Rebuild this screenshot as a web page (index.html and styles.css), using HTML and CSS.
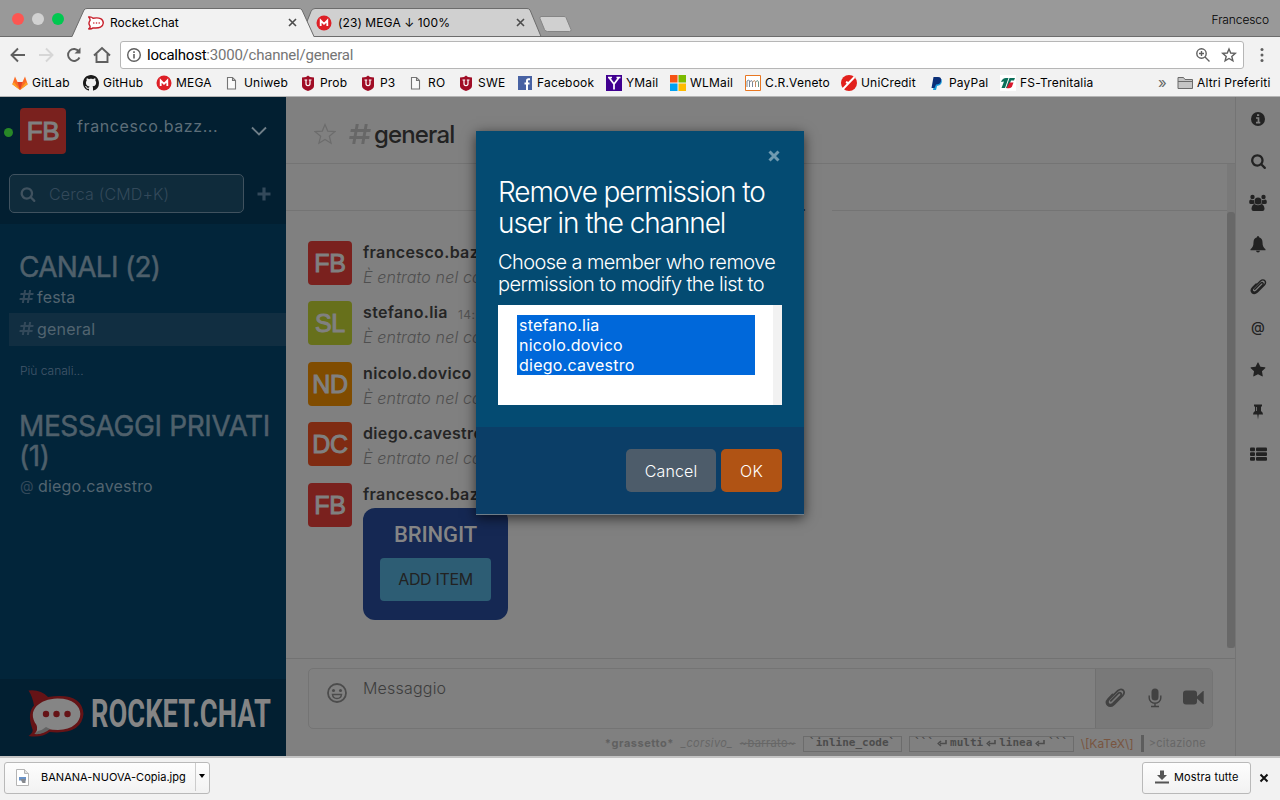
FILE: index.html
```html
<!DOCTYPE html>
<html lang="it">
<head>
<meta charset="utf-8">
<title>Rocket.Chat</title>
<link rel="stylesheet" href="styles.css">
</head>
<body>
<svg class="defs" width="0" height="0">
  <symbol id="search" viewBox="0 0 1792 1792"><path d="M1216 832q0-185-131.5-316.5t-316.5-131.5-316.5 131.5-131.5 316.5 131.5 316.5 316.5 131.5 316.5-131.5 131.5-316.5zm512 832q0 52-38 90t-90 38q-54 0-90-38l-343-342q-179 124-399 124-143 0-273.5-55.5t-225-150-150-225-55.5-273.5 55.5-273.5 150-225 225-150 273.5-55.5 273.5 55.5 225 150 150 225 55.5 273.5q0 220-124 399l343 343q37 37 37 90z"/></symbol>
  <symbol id="star" viewBox="0 0 1792 1792"><path d="M1728 647q0 22-26 48l-363 354 86 500q1 7 1 20 0 21-10.5 35.5t-30.5 14.5q-19 0-40-12l-449-236-449 236q-22 12-40 12-21 0-31.5-14.5t-10.5-35.5q0-6 2-20l86-500-364-354q-25-27-25-48 0-37 56-46l502-73 225-455q19-41 49-41t49 41l225 455 502 73q56 9 56 46z"/></symbol>
  <symbol id="clip" viewBox="0 0 18 18"><path d="M5 11.800L11.300 5.500q1.400-1.200 2.300-.3t-.3 2.300L6.600 14.200q-2 1.700-3.500.2t.2-3.500L11 3.200q2.600-2.200 4.600-.4 1.800 2-.4 4.600l-7.400 7.400q-3.200 2.900-5.500.7t.5-5.400L6.500 6.300" fill="none" stroke-width="1.500" stroke-linecap="round"/></symbol>
  <symbol id="page" viewBox="0 0 16 16"><path d="M3.500 2.500h5l3 3v8.500h-8zM8.500 2.500v3h3" fill="#fafafa" stroke="#757575" stroke-width="1.100"/></symbol>
  <symbol id="shield" viewBox="0 0 16 16"><path d="M8 0.500l2 1.500 4 .5v8.500q0 3-6 5-6-2-6-5v-8.500l4-.5z" fill="#a00d26"/><path d="M4.500 5h2.700M8.800 5h2.700M6 5v3.500q0 2.200 2 2.200t2-2.200v-3.500" fill="none" stroke="#fff" stroke-width="1.200"/></symbol>
  <symbol id="mega" viewBox="0 0 16 16"><circle cx="8" cy="8" r="7.500" fill="#dd1f26"/><path d="M4.700 11v-5.500l3.300 3.300 3.300-3.300v5.500" fill="none" stroke="#fff" stroke-width="1.800"/></symbol>
</svg>

<header class="tabs">
  <svg class="tab-shapes" width="600" height="37">
    <circle cx="18" cy="19" r="6" fill="#fc5652"/><circle cx="38" cy="19" r="6" fill="#d1d1d1"/><circle cx="58" cy="19" r="6" fill="#00c850"/>
    <path d="M306 36.500h235L530 10q-1-1.500-3-1.500H315q-3 0-4 3L306 24z" fill="#d0d0d0" stroke="#6c6c6c"/>
    <path d="M541 16.500h23q1.500 0 2 1l5 12q.5 2-1.500 2h-22q-2 0-3-2l-4.500-11q-.5-2 1-2z" fill="#d0d0d0" stroke="#858585"/>
    <path d="M72 37L84 10q1-1.500 3-1.500H299q2 0 3 1.500L314 37z" fill="#f2f2f2"/>
    <path d="M0 36.500H72L84 10q1-1.500 3-1.500H299q2 0 3 1.500L314 36.500H600" fill="none" stroke="#6c6c6c"/>
  </svg>
  <div class="tab first">
    <svg width="16" height="16" viewBox="0 0 16 16"><path d="M.7 2q2.600-.5 4.300 1.200 10-1.700 10.300 4.800-.5 6-10.300 4.900-1.800 1.400-4.300 1 2-1.300 1.200-3-2-2.700.2-5.600Q2.200 3.600.7 2z" fill="#fff" stroke="#c8202c" stroke-width="1.400"/><circle cx="5.800" cy="8" r=".8" fill="#c8202c"/><circle cx="8.500" cy="8" r=".8" fill="#c8202c"/><circle cx="11.200" cy="8" r=".8" fill="#c8202c"/></svg>
    <span>Rocket.Chat</span><svg class="x" width="9" height="9" viewBox="0 0 9 9"><path d="M1 1l7 7M8 1l-7 7"/></svg>
  </div>
  <div class="tab second">
    <svg width="16" height="16"><use href="#mega"/></svg>
    <span>(23) MEGA ↓ 100%</span><svg class="x" width="9" height="9" viewBox="0 0 9 9"><path d="M1 1l7 7M8 1l-7 7"/></svg>
  </div>
  <span class="profile">Francesco</span>
</header>

<div class="toolbar">
  <svg class="nav" width="110" height="20" viewBox="0 0 110 20" fill="none" stroke="#5f5f5f" stroke-width="1.900">
    <path d="M16 10H3M9 3.500L2.500 10l6.500 6.500"/>
    <path d="M30 10h13M37 3.500L43.500 10l-6.500 6.500" stroke="#d6d6d6"/>
    <path d="M70 6.500a6 6 0 1 0 .5 6"/><path d="M71.500 2.500v6h-6z" fill="#5f5f5f" stroke="none"/>
    <path d="M85 10.500l8-7.500 8 7.500M87.500 9v8h11V9"/>
  </svg>
  <div class="address">
    <svg width="16" height="16" viewBox="0 0 16 16"><circle cx="8" cy="8" r="6.300" fill="none" stroke="#5f5f5f" stroke-width="1.400"/><path d="M8 7v4.500M8 4.300v1.600" stroke="#5f5f5f" stroke-width="1.600"/></svg>
    <span class="url"><b>localhost</b>:3000/channel/general</span>
    <svg width="16" height="16" viewBox="0 0 16 16" fill="none" stroke="#5f5f5f" stroke-width="1.400"><circle cx="6.500" cy="6.500" r="4.700"/><path d="M10 10l4.500 4.500M4 6.500h5M6.500 4v5"/></svg>
    <svg class="fav" width="16" height="16" viewBox="0 0 16 16"><path d="M8 2l1.700 4 4.600.4-3.500 3 1.100 4.400L8 11.500l-3.900 2.300 1.100-4.400-3.500-3L6.300 6z" fill="none" stroke="#5f5f5f" stroke-width="1.400"/></svg>
  </div>
  <svg class="more" width="4" height="16" fill="#5f5f5f"><circle cx="2" cy="2.500" r="1.500"/><circle cx="2" cy="8" r="1.500"/><circle cx="2" cy="13.500" r="1.500"/></svg>
</div>

<nav class="bookmarks">
  <div class="bm"><svg width="16" height="16" viewBox="0 0 16 16"><path d="M8 15L.3 9.300 3 1.500 5.500 7h5L13 1.500l2.700 7.800z" fill="#fc6d26"/><path d="M8 15L5.500 7h5z" fill="#e24329"/><path d="M.3 9.300L8 15 2 7zM15.700 9.300L8 15 14 7z" fill="#fca326"/></svg>GitLab</div>
  <div class="bm"><svg width="16" height="16" viewBox="0 0 16 16"><path d="M8 0C3.580 0 0 3.580 0 8c0 3.540 2.290 6.530 5.470 7.590.4.070.55-.17.55-.38 0-.19-.01-.82-.01-1.490-2.010.37-2.530-.49-2.690-.94-.09-.23-.48-.94-.82-1.130-.28-.15-.68-.52-.01-.53.63-.01 1.080.58 1.230.82.72 1.210 1.870.87 2.330.66.07-.52.28-.87.51-1.070-1.780-.2-3.640-.89-3.640-3.950 0-.87.31-1.590.82-2.150-.08-.2-.36-1.020.08-2.120 0 0 .67-.21 2.200.82.64-.18 1.320-.27 2-.27s1.360.09 2 .27c1.530-1.040 2.200-.82 2.200-.82.44 1.100.16 1.920.08 2.120.51.56.82 1.270.82 2.150 0 3.070-1.870 3.750-3.650 3.950.29.25.54.73.54 1.480 0 1.070-.01 1.930-.01 2.200 0 .21.15.46.55.38A8.010 8.010 0 0 0 16 8c0-4.420-3.580-8-8-8z" fill="#1a1a1a"/></svg>GitHub</div>
  <div class="bm"><svg width="16" height="16"><use href="#mega"/></svg>MEGA</div>
  <div class="bm"><svg width="16" height="16"><use href="#page"/></svg>Uniweb</div>
  <div class="bm"><svg width="16" height="16"><use href="#shield"/></svg>Prob</div>
  <div class="bm"><svg width="16" height="16"><use href="#shield"/></svg>P3</div>
  <div class="bm"><svg width="16" height="16"><use href="#page"/></svg>RO</div>
  <div class="bm"><svg width="16" height="16"><use href="#shield"/></svg>SWE</div>
  <div class="bm"><svg width="16" height="16" viewBox="0 0 16 16"><path d="M1 1h14v14H1z" fill="#4862a3"/><path d="M13 4.300h-1.500q-1.500 0-1.500 1.500V15M7.500 8.500h5" fill="none" stroke="#fff" stroke-width="2"/></svg>Facebook</div>
  <div class="bm"><svg width="16" height="16" viewBox="0 0 16 16"><path d="M0 0h16v16H0z" fill="#400090"/><path d="M3 2.500L8 9l5-6.500M8 9v5.500M2 2.500h4M10.500 2.500h4" fill="none" stroke="#fff" stroke-width="1.700"/></svg>YMail</div>
  <div class="bm"><svg width="16" height="16" viewBox="0 0 16 16"><path d="M0 0h7.500v7.500H0z" fill="#f65314"/><path d="M8.500 0H16v7.500H8.500z" fill="#7cbb00"/><path d="M0 8.500h7.500V16H0z" fill="#00a1f1"/><path d="M8.500 8.500H16V16H8.500z" fill="#ffbb00"/></svg>WLMail</div>
  <div class="bm"><svg width="16" height="16" viewBox="0 0 16 16" fill="none"><path d="M.5.500h15v15H.5z" fill="#fff" stroke="#e87722"/><path d="M2 12V6q2-2 2.500 0v6M4.500 7q2.500-3 3 0v5" stroke="#789"/><path d="M7.500 7q2.500-3 3 0v5" stroke="#c98b60"/><path d="M10.500 7q2.500-3 3 0v5" stroke="#6a9585"/></svg>C.R.Veneto</div>
  <div class="bm"><svg width="16" height="16" viewBox="0 0 16 16"><circle cx="8" cy="8" r="8" fill="#e2201c"/><path d="M1.500 14.500L13.500 2M5 7l3 1.500" fill="none" stroke="#fff" stroke-width="2"/></svg>UniCredit</div>
  <div class="bm"><svg width="16" height="16" viewBox="0 0 16 16"><path d="M6 4h6.500q1.500 6-4.500 7l-1 4H4z" fill="#1a9bdc"/><path d="M4.500 2H9q4 0 3 4.300-1 3.200-5 3.200L5.500 13H2.500z" fill="#0b2f78"/></svg>PayPal</div>
  <div class="bm"><svg width="16" height="16" viewBox="0 0 16 16"><path d="M0 0h16v16H0z" fill="#fff"/><path d="M1 7q1.500-4 5-4h2.500L5 13H1.500L4 6.500z" fill="#0b6f59"/><path d="M9.500 3H15l-1 2.500h-3L8.500 13H6z" fill="#0b6f59"/><path d="M9.500 7.500h4l-1.500 4q-.8 1.800-3 1.800H6.500z" fill="#d9182d"/></svg>FS-Trenitalia</div>
  <span class="overflow">»</span>
  <div class="bm folder"><svg width="17" height="16" viewBox="0 0 17 16"><path d="M1 13.500V2.500h5.500L8 4.500h7.500v9z" fill="#c5c5c5" stroke="#6b6b6b"/><path d="M1 6.500h14.500" stroke="#6b6b6b"/></svg>Altri Preferiti</div>
</nav>

<div class="app">
  <aside class="sidebar">
    <div class="side-head">
      <div class="account">
        <i class="online"></i><div class="avatar big red">FB</div><span class="account-name">francesco.bazz...</span>
        <svg width="18" height="11" viewBox="0 0 18 11"><path d="M2 1.500l7 7 7-7" fill="none" stroke="#6f7e88" stroke-width="1.900"/></svg>
      </div>
      <div class="search-row">
        <div class="search"><svg width="16" height="16"><use href="#search"/></svg><span>Cerca (CMD+K)</span></div>
        <svg width="14" height="14" viewBox="0 0 14 14"><path d="M7 .5v13M.5 7h13" stroke="#33495a" stroke-width="3.200"/></svg>
      </div>
    </div>
    <div class="side-body">
      <h3 class="channels">CANALI (2)</h3>
      <div class="room"><i class="hash"></i><span>festa</span></div>
      <div class="room active"><i class="hash"></i><span>general</span></div>
      <div class="more-channels">Più canali...</div>
      <h3>MESSAGGI PRIVATI (1)</h3>
      <div class="room dm"><i>@</i><span>diego.cavestro</span></div>
    </div>
    <div class="logo">
      <svg width="286" height="77" viewBox="0 679 286 77">
        <path d="M28.500 690.500q12-1.500 19.500 6.500 34-5 35.500 17-2 21-34 18-8 6-21 4 6-4 3.500-8-5-15 2-22.500-1.500-9-5.500-15z" fill="#651316"/>
        <path d="M57 698.500c31-.5 31 31 1 31.500q-6 0-10-1-5 5-13.500 5 4-4 2-9C26 710 40 699 57 698.500z" fill="#858585"/>
        <path d="M38 731q4-.5 8-4l4 2q-7 6-15.500 5z" fill="#636363"/>
        <circle cx="46" cy="714" r="3.200" fill="#651316"/><circle cx="56.500" cy="714" r="3.200" fill="#651316"/><circle cx="67.500" cy="714" r="3.200" fill="#651316"/>
        <text transform="translate(91 727) scale(.7 1)" textLength="257">ROCKET.CHAT</text>
      </svg>
    </div>
  </aside>

  <main class="chat">
    <div class="room-head">
      <svg width="22" height="22" viewBox="0 0 22 22"><path d="M11 1.500l2.700 6.600 7.100.5-5.500 4.600 1.800 7-6.100-3.800-6.100 3.800 1.800-7L1.200 8.600l7.100-.5z" fill="none" stroke="#6c6c6c" stroke-width="1.200"/></svg>
      <i class="hash large"></i><h2>general</h2>
    </div>
    <div class="messages">
      <div class="date"><i></i><span>.</span><i></i></div>
      <div class="msg"><div class="avatar red">FB</div><div><b>francesco.baz</b><em>È entrato nel ca</em></div></div>
      <div class="msg"><div class="avatar lime">SL</div><div><b>stefano.lia</b><time>14:</time><em>È entrato nel ca</em></div></div>
      <div class="msg tall"><div class="avatar amber">ND</div><div><b>nicolo.dovico</b><em>È entrato nel ca</em></div></div>
      <div class="msg"><div class="avatar orange">DC</div><div><b>diego.cavestro</b><em>È entrato nel ca</em></div></div>
      <div class="msg tall"><div class="avatar red">FB</div><div><b>francesco.baz</b><div class="bringit"><strong>BRINGIT</strong><span>ADD ITEM</span></div></div></div>
      <div class="track"><i></i></div>
    </div>
    <div class="composer-wrap">
      <div class="composer">
        <svg class="smile" width="22" height="22" viewBox="0 0 22 22"><circle cx="11" cy="11" r="9" fill="none" stroke="#4c4c4c" stroke-width="1.800"/><circle cx="7.500" cy="8.500" r="1.500" fill="#4c4c4c"/><circle cx="14.500" cy="8.500" r="1.500" fill="#4c4c4c"/><path d="M6.500 12.500h9q-.5 4-4.500 4t-4.500-4z" fill="none" stroke="#4c4c4c" stroke-width="1.500"/></svg>
        <span>Messaggio</span>
        <div class="tools">
          <svg width="21" height="21" stroke="#424242"><use href="#clip"/></svg>
          <svg width="14" height="20" viewBox="0 0 14 20"><rect x="3.500" y=".5" width="7" height="12" rx="3.500"/><path d="M1.200 7.500v2.500a5.800 5.300 0 0 0 11.600 0V7.500M7 15.500V18M3 18.500h8" fill="none" stroke="#424242" stroke-width="1.400"/></svg>
          <svg width="21" height="15" viewBox="0 0 21 15"><rect x="0" y=".5" width="14" height="14" rx="3"/><path d="M14 6.500l6-5.500h.7v13h-.7l-6-5.500z"/></svg>
        </div>
      </div>
      <div class="tips"><b>*grassetto*</b><em>_corsivo_</em><s>~barrato~</s><code class="one">`inline_code`</code><code class="two">```<svg width="10" height="7" viewBox="0 0 10 7"><path d="M9 0v3.500H3M4 1L1.300 3.500 4 6" fill="none" stroke="#4c4c4c" stroke-width="1.600"/></svg>multi<svg width="10" height="7" viewBox="0 0 10 7"><path d="M9 0v3.500H3M4 1L1.300 3.500 4 6" fill="none" stroke="#4c4c4c" stroke-width="1.600"/></svg>linea<svg width="10" height="7" viewBox="0 0 10 7"><path d="M9 0v3.500H3M4 1L1.300 3.500 4 6" fill="none" stroke="#4c4c4c" stroke-width="1.600"/></svg>```</code><span class="katex">\[KaTeX\]</span><q>&gt;citazione</q></div>
    </div>
  </main>

  <aside class="flex-tabs">
    <svg width="16" height="16" viewBox="0 0 16 16"><circle cx="8" cy="8" r="7"/><path d="M6 7h2.500v4.500M6 11.700h4.300M7 4.200h2.200" fill="none" stroke="#808080" stroke-width="1.700"/></svg>
    <svg width="17" height="16"><use href="#search"/></svg>
    <svg width="18" height="18" viewBox="0 0 18 18"><circle cx="9" cy="7" r="3.500"/><circle cx="3.500" cy="3" r="2.200"/><circle cx="14.500" cy="3" r="2.200"/><path d="M2.500 17v-2.500Q3 10.500 5.500 10q3.500 2.500 7 0 2.500.5 3 4.500V15q0 2-2 2h-9q-2 0-2-2zM.2 8.500Q0 5.500 2 5.500q1.500 1 3 .5-.5 3 1 3.500l-2 .5H2q-1.800 0-1.800-1.500zM17.800 8.500Q18 5.500 16 5.500q-1.500 1-3 .5.500 3-1 3.500l2 .5h2q1.800 0 1.800-1.500z"/></svg>
    <svg width="16" height="17" viewBox="0 0 16 17"><path d="M8 0q1 0 1 1.200 3.500 1 3.500 5 0 5 3 7v1H.5v-1q3-2 3-7 0-4 3.500-5Q7 0 8 0zM6 14.800h4q-.3 1.700-2 1.700t-2-1.700z"/></svg>
    <svg width="17" height="17" stroke="#222"><use href="#clip"/></svg>
    <span>@</span>
    <svg width="16" height="16"><use href="#star"/></svg>
    <svg width="12" height="16" viewBox="0 0 12 16"><path d="M2 .5h8v2H9v4.500q2 1 2 3.500H6.700L6 15.500l-.7-5H1q0-2.500 2-3.500V2.500H2z"/><path d="M4.500 3v4" stroke="#808080" stroke-width=".8"/></svg>
    <svg width="17" height="14" viewBox="0 0 17 14"><rect width="5" height="3.800" y=".5" rx="1"/><rect x="6" width="11" height="3.800" y=".5" rx="1"/><rect width="5" height="3.800" y="5.200" rx="1"/><rect x="6" width="11" height="3.800" y="5.200" rx="1"/><rect width="5" height="3.800" y="9.900" rx="1"/><rect x="6" width="11" height="3.800" y="9.900" rx="1"/></svg>
  </aside>

  <section class="modal">
    <div class="modal-body">
      <svg class="close" width="12" height="12" viewBox="0 0 12 12"><path d="M1.500 1.500l9 9M10.500 1.500l-9 9" stroke="#709ab0" stroke-width="3"/></svg>
      <h1>Remove permission to<br>user in the channel</h1>
      <p>Choose a member who remove<br>permission to modify the list to</p>
      <div class="select"><ul><li>stefano.lia</li><li>nicolo.dovico</li><li>diego.cavestro</li></ul></div>
    </div>
    <div class="modal-foot"><span class="btn cancel">Cancel</span><span class="btn ok">OK</span></div>
  </section>
</div>

<footer class="downloads">
  <div class="dl"><svg width="13" height="17" viewBox="0 0 13 17"><path d="M.5.500h8l4 4v12H.5z" fill="#fff" stroke="#b5b5b5"/><path d="M8.500.5v4h4" fill="#e2e2e2" stroke="#b5b5b5"/><path d="M3 8h7v3.500H3z" fill="#6892c8"/><path d="M4.500 10h5v4h-3z" fill="#85888d"/></svg><span>BANANA-NUOVA-Copia.jpg</span><i></i></div>
  <div class="show"><svg width="14" height="14" viewBox="0 0 14 14" fill="#555"><path d="M5 .5h4V5h3l-5 5-5-5h3zM0 11.500h14v2H0z"/></svg><span>Mostra tutte</span></div>
  <svg class="end" width="10" height="10" viewBox="0 0 10 10"><path d="M1.500 1.500l7 7M8.500 1.500l-7 7" stroke="#111" stroke-width="2"/></svg>
</footer>
</body>
</html>
```
FILE: styles.css
```css
* { box-sizing: border-box; }
body { margin: 0; width: 1280px; height: 800px; overflow: hidden; display: flex; flex-direction: column; font-family: Inter, sans-serif; font-size: 16px; background: #f2f2f2; }
h1, h2, h3, p, ul { margin: 0; padding: 0; font-weight: 400; }
svg { flex: none; display: block; }
.defs { position: absolute; }
i { font-style: normal; }

/* browser chrome */
.tabs { position: relative; height: 37px; flex: none; background: #999; border-bottom: 1px solid #6c6c6c; display: flex; align-items: center; padding-left: 88px; font-size: 12px; color: #000; }
.tab-shapes { position: absolute; left: 0; top: 0; }
.tab { position: relative; display: flex; align-items: center; height: 20px; margin-top: 9px; }
.tab span { flex: 1; margin-left: 6px; }
.tab.first { width: 209px; }
.tab.first span { letter-spacing: .05px; }
.tab.second { width: 209px; margin-left: 19px; }
.tab.second span { letter-spacing: .1px; }
.x { stroke: #4c4c4c; stroke-width: 1.6; }
.profile { margin-left: auto; padding-right: 11px; margin-top: 3px; letter-spacing: -.1px; font-weight: 300; }
.toolbar { height: 35px; flex: none; display: flex; align-items: center; padding-left: 9px; }
.nav { margin-right: 1px; }
.address { width: 1124px; height: 28px; margin-top: 1px; border: 1px solid #b6b6b6; border-radius: 3px; background: #fff; display: flex; align-items: center; padding: 0 6px 0 5px; color: #757575; }
.url { flex: 1; margin-left: 5px; font: 15px Roboto, sans-serif; letter-spacing: -.22px; }
.url b { font-weight: 400; color: #000; }
.fav { margin-left: 10px; }
.more { margin-left: 16px; }
.bookmarks { height: 25px; flex: none; display: grid; grid-template-columns: 71px 73px 68px 76px 60px 48px 50px 59px 89px 64px 75px 96px 88px 71px 158px 19px auto; align-items: center; padding: 0 0 3px 12px; border-bottom: 1px solid #b5b5b5; font-size: 12px; letter-spacing: .18px; color: #000; white-space: nowrap; }
.bm { display: flex; align-items: center; gap: 4px; }
.overflow { color: #666; font-size: 15px; }
.folder { gap: 3px; }

/* application */
.app { position: relative; height: 659px; flex: none; display: flex; background: #808080; }
.sidebar { width: 286px; display: flex; flex-direction: column; background: #02253a; color: #5b6b76; }
.side-head { height: 127px; background: #021f31; }
.account { display: flex; height: 68px; padding: 0 18px 0 4px; align-items: center; }
.online { width: 9px; height: 9px; border-radius: 50%; background: #288827; margin: 3px 7px 0 0; }
.avatar { width: 44px; height: 44px; border-radius: 4px; flex: none; display: flex; align-items: center; justify-content: center; font: 25px "Liberation Sans", sans-serif; letter-spacing: -.3px; -webkit-text-stroke: 1px #808080; color: #808080; }
.avatar.big { width: 46px; height: 46px; font-size: 26px; }
.red { background: #7a211e; } .lime { background: #67701b; } .amber { background: #804c00; } .orange { background: #7f2b12; }
.account-name { flex: 1; margin: -10px 0 0 11px; letter-spacing: .6px; color: #5d6e79; }
.search-row { display: flex; align-items: center; gap: 13px; padding: 9px 0 0 9px; }
.search { width: 235px; height: 39px; border: 1px solid #40525f; border-radius: 5px; background: #0f2b3b; display: flex; align-items: center; padding-left: 10px; gap: 13px; color: #33495a; fill: #40525f; font-weight: 300; letter-spacing: .15px; }
.side-body { flex: 1; padding-top: 28px; }
.side-body h3 { padding-left: 19px; font-size: 28px; line-height: 30px; letter-spacing: -.38px; color: #4f606b; -webkit-text-stroke: .5px #4f606b; }
.side-body .channels { letter-spacing: -.7px; }
.room { height: 33px; margin-left: 9px; padding: 0 0 2px 11px; display: flex; align-items: center; gap: 4px; letter-spacing: .2px; color: #526470; }
.room:not(.active):not(.dm) { height: 31px; }
.active { background: #112e41; }
.room i { width: 13px; font-size: 14px; color: #33495a; }
.hash { display: block; height: 13px; background: linear-gradient(#33495a 0 0) 0 3px/100% 2px no-repeat, linear-gradient(#33495a 0 0) 0 8px/100% 2px no-repeat, linear-gradient(#33495a 0 0) 3px 0/2px 100% no-repeat, linear-gradient(#33495a 0 0) 8px 0/2px 100% no-repeat; transform: skewX(-10deg); }
.more-channels { height: 48px; padding: 1px 0 0 20px; line-height: 48px; font-size: 12px; font-weight: 300; color: #42576a; }
.more-channels + h3 { padding-top: 17px; }
.dm { height: 31px; gap: 5px; }
.logo { height: 77px; background: #021f31; }
.logo text { font: bold 39px Roboto, sans-serif; fill: #858585; }

.chat { width: 950px; border-right: 1px solid #747474; display: flex; flex-direction: column; }
.room-head { height: 67px; border-bottom: 1px solid #747474; display: flex; align-items: center; padding: 8px 0 0 28px; }
.hash.large { width: 20px; height: 20px; margin: 0 4px 0 14px; background: linear-gradient(#676767 0 0) 0 5px/100% 3px no-repeat, linear-gradient(#676767 0 0) 0 12px/100% 3px no-repeat, linear-gradient(#676767 0 0) 4px 0/3px 100% no-repeat, linear-gradient(#676767 0 0) 13px 0/3px 100% no-repeat; }
.room-head h2 { font-size: 24px; font-weight: 500; letter-spacing: -.85px; color: #222; }
.messages { position: relative; height: 494px; }
.date { display: flex; align-items: center; height: 20px; margin: 36px 8px 21px 0; line-height: 12px; }
.date i { height: 1px; background: #747474; width: 190px; }
.date i:last-child { flex: 1; }
.date span { width: 356px; padding-right: 26px; text-align: right; margin-top: -10px; color: #222; }
.msg { display: flex; gap: 11px; height: 60px; padding-left: 22px; white-space: nowrap; }
.msg.tall { height: 61px; padding-top: 1px; }
.msg b { position: relative; top: -1px; font-weight: 600; font-size: 16px; line-height: 24px; color: #252525; letter-spacing: .35px; }
.msg em { display: block; margin-top: -1px; font-weight: 300; line-height: 26px; color: #4f4f4f; letter-spacing: .15px; }
.msg time { font-size: 12px; color: #555; margin-left: 10px; letter-spacing: .5px; }
.bringit { width: 145px; height: 112px; margin-top: 1px; border-radius: 12px; background: #152853; display: flex; flex-direction: column; align-items: center; }
.bringit strong { font: 500 22px/26px Roboto, sans-serif; margin: 14px 0 10px; color: #858585; letter-spacing: -.1px; }
.bringit span { width: 111px; height: 43px; border-radius: 4px; background: #2d5d74; line-height: 43px; text-align: center; color: #222; font-size: 16px; letter-spacing: -.35px; }
.track { position: absolute; right: 0; top: 0; width: 8px; height: 484px; background: #797979; }
.track i { display: block; margin-top: 0; height: 436px; border-radius: 3px; background: #686868; transform: translateY(48px); }
.composer-wrap { flex: 1; border-top: 1px solid #727272; padding: 9px 22px 0; }
.composer { width: 905px; height: 61px; border: 1px solid #747474; border-radius: 5px; display: flex; color: #3d3d3d; padding-left: 17px; font-weight: 300; overflow: hidden; }
.smile { margin: 13px 15px 0 0; }
.composer span { flex: 1; padding-top: 9px; letter-spacing: .2px; }
.tools { width: 117px; background: #797979; border-left: 1px solid #707070; display: flex; align-items: center; justify-content: space-between; padding: 0 8px 2px 9px; fill: #424242; }
.tips { display: flex; align-items: center; justify-content: flex-end; gap: 7px; padding: 5px 7px 0 0; height: 24px; font-size: 11px; line-height: 17px; color: #676767; white-space: nowrap; }
.tips b { letter-spacing: .55px; color: #606060; }
.tips em, .tips s { letter-spacing: .4px; }
.tips code { height: 16px; border: 1px solid #6c6c6c; font: bold 11px/12px "DejaVu Sans Mono", monospace; color: #4c4c4c; display: flex; justify-content: center; align-items: center; gap: 3px; padding-bottom: 1px; }
.one { width: 99px; } .two { width: 165px; }
.katex { color: #79553f; font-size: 12px; }
.tips q { quotes: none; border-left: 3px solid #5d5d5d; padding-left: 5px; letter-spacing: .3px; }
.flex-tabs { width: 44px; padding-top: 1px; display: grid; grid-template-rows: repeat(9, 41.900px); justify-items: center; align-items: center; fill: #222; color: #222; }
.flex-tabs span { font-size: 14px; font-weight: 500; margin-top: -3px; }

/* dialog floating over the application */
.modal { position: absolute; left: 476px; top: 34px; width: 328px; height: 384px; display: flex; flex-direction: column; background: #0b3e67; border-bottom: 1px solid #6f7d88; box-shadow: 0 3px 12px rgba(0,0,0,.65); color: #fff; }
.modal-body { height: 296px; padding: 19px 22px 0; background: #044b72; }
.close { margin-left: 270px; }
.modal h1 { margin-top: 15px; font-size: 28px; line-height: 31px; font-weight: 300; letter-spacing: -1.1px; white-space: nowrap; }
.modal p { margin-top: 12px; font-size: 20px; line-height: 22px; font-weight: 300; letter-spacing: -.58px; white-space: nowrap; }
.select { margin-top: 10px; height: 100px; padding: 10px 18px 0 19px; background: #fff; border-right: 9px solid #f2f2f2; }
.select ul { width: 238px; list-style: none; background: #0068da; }
.select li { padding-left: 2px; line-height: 20px; letter-spacing: .24px; }
.modal-foot { display: flex; justify-content: flex-end; gap: 5px; padding: 22px; }
.btn { height: 43px; border-radius: 5px; line-height: 44px; text-align: center; font-weight: 300; letter-spacing: .15px; }
.cancel { width: 90px; background: #4d5c6a; }
.ok { width: 61px; background: #b05314; }

.downloads { height: 44px; border-top: 2px solid #c4c4c4; display: flex; align-items: center; padding: 0 11px 3px 4px; font-size: 11px; color: #000; background: #f2f2f2; }
.dl, .show { height: 32px; display: flex; align-items: center; border: 1px solid #b9b9b9; border-radius: 3px; background: linear-gradient(#fdfdfd, #f2f2f2); padding-bottom: 1px; }
.dl { width: 206px; padding-left: 11px; }
.dl span { width: 154px; margin-left: 12px; white-space: nowrap; letter-spacing: .02px; }
.dl i { flex: 1; height: 28px; border-left: 1px solid #ccc; }
.dl i::after { content: ""; display: block; margin: 11px 0 0 3px; width: 0; border: 3px solid transparent; border-top: 4px solid #000; }
.show { width: 109px; margin-left: auto; padding-left: 12px; gap: 5px; letter-spacing: .15px; }
.end { margin-left: 8px; }
```
